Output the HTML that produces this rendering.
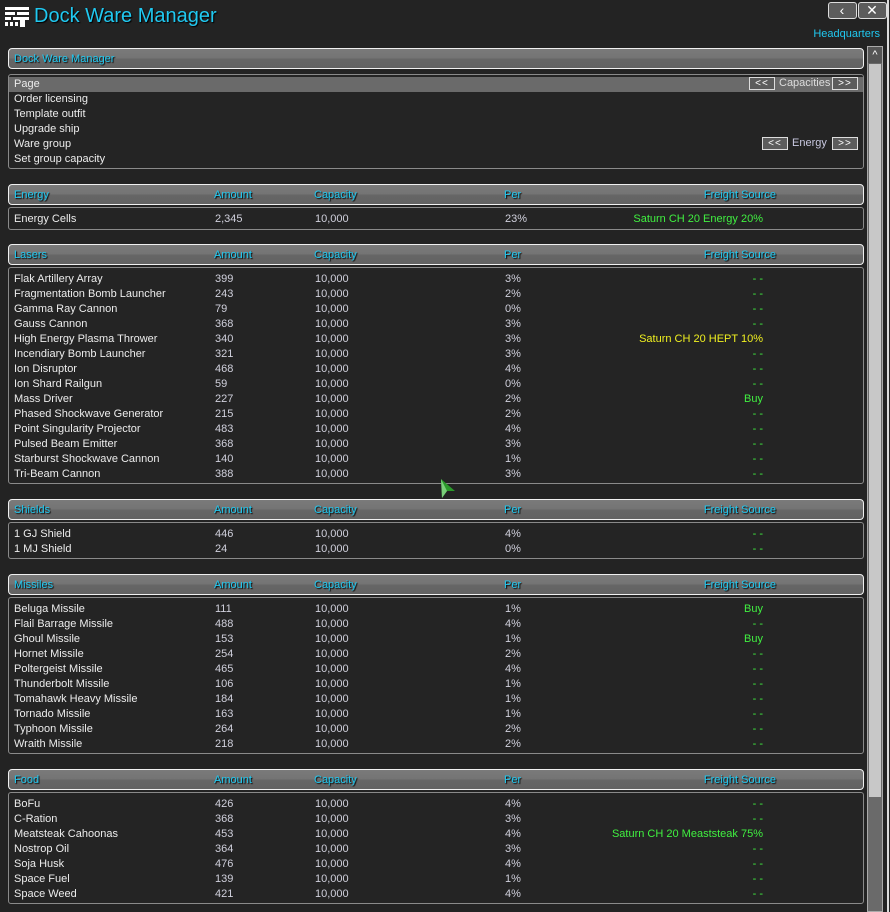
<!DOCTYPE html>
<html><head><meta charset="utf-8">
<style>
*{margin:0;padding:0;box-sizing:border-box}
body{width:890px;height:912px;background:#232323;font-family:"Liberation Sans",sans-serif;font-size:11px;color:#e6e6e6;position:relative;overflow:hidden}
.a{position:absolute}
.hd{position:absolute;left:8px;width:856px;height:21px;border:1px solid #f0f0f0;border-radius:4px;background:linear-gradient(#7a7a7a 0,#747474 50%,#666 51%,#626262 100%);color:#20c8f0;text-shadow:1px 1px 1px #000}
.hd span{position:absolute;top:4px;line-height:13px}
.bd{position:absolute;left:8px;width:856px;border:1px solid #8a8a8a;border-radius:3px;background:#242424;padding-top:4px}
.r{position:relative;height:15px;line-height:15px}
.r span{position:absolute;top:0}
.n{left:5px;color:#ececec}
.am{left:206px;color:#d0d0dc}
.ca{left:306px;color:#d0d0dc}
.pe{left:496px;color:#d0d0dc}
.fs{right:100px;color:#40f040;text-align:right;white-space:nowrap}
.y{color:#f0f020!important}
.btn{position:absolute;height:13px;border:1px solid #ddd;background:#5c5c5c;color:#fff;font-size:10px;line-height:11px;text-align:center;letter-spacing:1px}
</style></head><body>
<svg class="a" style="left:5px;top:7px" width="24" height="20"><g fill="#fff"><rect x="0" y="0" width="24" height="3"/><rect x="0" y="5" width="10" height="3"/><rect x="12" y="5" width="12" height="3"/><rect x="0" y="10" width="6" height="3"/><rect x="8" y="10" width="16" height="3"/><rect x="15" y="10" width="5" height="10"/><rect x="0" y="15" width="3" height="4"/><rect x="5" y="15" width="3" height="4"/><rect x="10" y="15" width="3" height="4"/></g></svg>
<div class="a" style="left:34px;top:5px;font-size:20px;color:#20c8f0;text-shadow:1px 1px 1px #000">Dock Ware Manager</div>
<div class="btn" style="left:828px;top:2px;width:29px;height:17px;font-size:14px;line-height:15px;border-radius:3px">&lsaquo;</div>
<div class="btn" style="left:858px;top:2px;width:29px;height:17px;font-size:14px;line-height:15px;border-radius:3px">✕</div>
<div class="a" style="right:10px;top:28px;color:#20c8f0">Headquarters</div>
<div class="a" style="left:867px;top:46px;width:16px;height:866px;background:#6a6a6a;border:1px solid #aaa"></div>
<div class="a" style="left:868px;top:47px;width:14px;height:16px;background:#555;color:#fff;text-align:center;font-size:11px;line-height:16px">^</div>
<div class="a" style="left:869px;top:64px;width:12px;height:733px;background:#c8c8c8"></div>
<div class="a" style="left:887px;top:0;width:2px;height:912px;background:#ddd"></div>

<div class="hd" style="top:48px"><span style="left:5px">Dock Ware Manager</span></div>
<div class="bd" style="top:74px;height:95px;padding-top:2px">
<div class="r" style="background:#6a6a6a"><span class="n">Page</span></div>
<div class="r"><span class="n">Order licensing</span></div>
<div class="r"><span class="n">Template outfit</span></div>
<div class="r"><span class="n">Upgrade ship</span></div>
<div class="r"><span class="n">Ware group</span></div>
<div class="r"><span class="n">Set group capacity</span></div>
</div>
<div class="btn" style="left:749px;top:77px;width:26px">&lt;&lt;</div>
<div class="a" style="left:779px;top:77px;color:#ddd">Capacities</div>
<div class="btn" style="left:832px;top:77px;width:26px">&gt;&gt;</div>
<div class="btn" style="left:762px;top:137px;width:26px">&lt;&lt;</div>
<div class="a" style="left:792px;top:137px;color:#c8c8e0">Energy</div>
<div class="btn" style="left:832px;top:137px;width:26px">&gt;&gt;</div>

<div class="hd" style="top:184px"><span style="left:5px">Energy</span><span style="left:205px">Amount</span><span style="left:305px">Capacity</span><span style="left:495px">Per</span><span style="right:87px">Freight Source</span></div>
<div class="bd" style="top:207px;height:23px"><div class="r"><span class="n">Energy Cells</span><span class="am">2,345</span><span class="ca">10,000</span><span class="pe">23%</span><span class="fs">Saturn CH 20 Energy 20%</span></div></div>

<div class="hd" style="top:244px"><span style="left:5px">Lasers</span><span style="left:205px">Amount</span><span style="left:305px">Capacity</span><span style="left:495px">Per</span><span style="right:87px">Freight Source</span></div>
<div class="bd" style="top:267px;height:217px">
<div class="r"><span class="n">Flak Artillery Array</span><span class="am">399</span><span class="ca">10,000</span><span class="pe">3%</span><span class="fs">- -</span></div>
<div class="r"><span class="n">Fragmentation Bomb Launcher</span><span class="am">243</span><span class="ca">10,000</span><span class="pe">2%</span><span class="fs">- -</span></div>
<div class="r"><span class="n">Gamma Ray Cannon</span><span class="am">79</span><span class="ca">10,000</span><span class="pe">0%</span><span class="fs">- -</span></div>
<div class="r"><span class="n">Gauss Cannon</span><span class="am">368</span><span class="ca">10,000</span><span class="pe">3%</span><span class="fs">- -</span></div>
<div class="r"><span class="n">High Energy Plasma Thrower</span><span class="am">340</span><span class="ca">10,000</span><span class="pe">3%</span><span class="fs y">Saturn CH 20 HEPT 10%</span></div>
<div class="r"><span class="n">Incendiary Bomb Launcher</span><span class="am">321</span><span class="ca">10,000</span><span class="pe">3%</span><span class="fs">- -</span></div>
<div class="r"><span class="n">Ion Disruptor</span><span class="am">468</span><span class="ca">10,000</span><span class="pe">4%</span><span class="fs">- -</span></div>
<div class="r"><span class="n">Ion Shard Railgun</span><span class="am">59</span><span class="ca">10,000</span><span class="pe">0%</span><span class="fs">- -</span></div>
<div class="r"><span class="n">Mass Driver</span><span class="am">227</span><span class="ca">10,000</span><span class="pe">2%</span><span class="fs">Buy</span></div>
<div class="r"><span class="n">Phased Shockwave Generator</span><span class="am">215</span><span class="ca">10,000</span><span class="pe">2%</span><span class="fs">- -</span></div>
<div class="r"><span class="n">Point Singularity Projector</span><span class="am">483</span><span class="ca">10,000</span><span class="pe">4%</span><span class="fs">- -</span></div>
<div class="r"><span class="n">Pulsed Beam Emitter</span><span class="am">368</span><span class="ca">10,000</span><span class="pe">3%</span><span class="fs">- -</span></div>
<div class="r"><span class="n">Starburst Shockwave Cannon</span><span class="am">140</span><span class="ca">10,000</span><span class="pe">1%</span><span class="fs">- -</span></div>
<div class="r"><span class="n">Tri-Beam Cannon</span><span class="am">388</span><span class="ca">10,000</span><span class="pe">3%</span><span class="fs">- -</span></div>
</div>
<svg class="a" style="left:440px;top:479px" width="16" height="20"><path d="M1 0 L15 12 L7 12 L2 19 Z" fill="#2a9a2a"/><path d="M1 0 L7 12 L2 19Z" fill="#7ad07a"/></svg>

<div class="hd" style="top:499px"><span style="left:5px">Shields</span><span style="left:205px">Amount</span><span style="left:305px">Capacity</span><span style="left:495px">Per</span><span style="right:87px">Freight Source</span></div>
<div class="bd" style="top:522px;height:37px">
<div class="r"><span class="n">1 GJ Shield</span><span class="am">446</span><span class="ca">10,000</span><span class="pe">4%</span><span class="fs">- -</span></div>
<div class="r"><span class="n">1 MJ Shield</span><span class="am">24</span><span class="ca">10,000</span><span class="pe">0%</span><span class="fs">- -</span></div>
</div>

<div class="hd" style="top:574px"><span style="left:5px">Missiles</span><span style="left:205px">Amount</span><span style="left:305px">Capacity</span><span style="left:495px">Per</span><span style="right:87px">Freight Source</span></div>
<div class="bd" style="top:597px;height:157px">
<div class="r"><span class="n">Beluga Missile</span><span class="am">111</span><span class="ca">10,000</span><span class="pe">1%</span><span class="fs">Buy</span></div>
<div class="r"><span class="n">Flail Barrage Missile</span><span class="am">488</span><span class="ca">10,000</span><span class="pe">4%</span><span class="fs">- -</span></div>
<div class="r"><span class="n">Ghoul Missile</span><span class="am">153</span><span class="ca">10,000</span><span class="pe">1%</span><span class="fs">Buy</span></div>
<div class="r"><span class="n">Hornet Missile</span><span class="am">254</span><span class="ca">10,000</span><span class="pe">2%</span><span class="fs">- -</span></div>
<div class="r"><span class="n">Poltergeist Missile</span><span class="am">465</span><span class="ca">10,000</span><span class="pe">4%</span><span class="fs">- -</span></div>
<div class="r"><span class="n">Thunderbolt Missile</span><span class="am">106</span><span class="ca">10,000</span><span class="pe">1%</span><span class="fs">- -</span></div>
<div class="r"><span class="n">Tomahawk Heavy Missile</span><span class="am">184</span><span class="ca">10,000</span><span class="pe">1%</span><span class="fs">- -</span></div>
<div class="r"><span class="n">Tornado Missile</span><span class="am">163</span><span class="ca">10,000</span><span class="pe">1%</span><span class="fs">- -</span></div>
<div class="r"><span class="n">Typhoon Missile</span><span class="am">264</span><span class="ca">10,000</span><span class="pe">2%</span><span class="fs">- -</span></div>
<div class="r"><span class="n">Wraith Missile</span><span class="am">218</span><span class="ca">10,000</span><span class="pe">2%</span><span class="fs">- -</span></div>
</div>

<div class="hd" style="top:769px"><span style="left:5px">Food</span><span style="left:205px">Amount</span><span style="left:305px">Capacity</span><span style="left:495px">Per</span><span style="right:87px">Freight Source</span></div>
<div class="bd" style="top:792px;height:112px">
<div class="r"><span class="n">BoFu</span><span class="am">426</span><span class="ca">10,000</span><span class="pe">4%</span><span class="fs">- -</span></div>
<div class="r"><span class="n">C-Ration</span><span class="am">368</span><span class="ca">10,000</span><span class="pe">3%</span><span class="fs">- -</span></div>
<div class="r"><span class="n">Meatsteak Cahoonas</span><span class="am">453</span><span class="ca">10,000</span><span class="pe">4%</span><span class="fs">Saturn CH 20 Meaststeak 75%</span></div>
<div class="r"><span class="n">Nostrop Oil</span><span class="am">364</span><span class="ca">10,000</span><span class="pe">3%</span><span class="fs">- -</span></div>
<div class="r"><span class="n">Soja Husk</span><span class="am">476</span><span class="ca">10,000</span><span class="pe">4%</span><span class="fs">- -</span></div>
<div class="r"><span class="n">Space Fuel</span><span class="am">139</span><span class="ca">10,000</span><span class="pe">1%</span><span class="fs">- -</span></div>
<div class="r"><span class="n">Space Weed</span><span class="am">421</span><span class="ca">10,000</span><span class="pe">4%</span><span class="fs">- -</span></div>
</div>
</body></html>
